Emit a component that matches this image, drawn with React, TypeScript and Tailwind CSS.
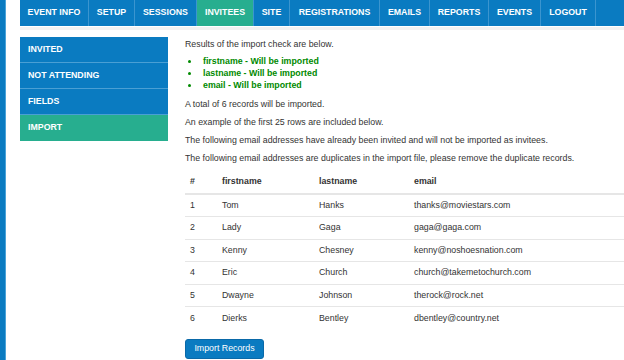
import React from "react";

const navItems = ["EVENT INFO", "SETUP", "SESSIONS", "INVITEES", "SITE", "REGISTRATIONS", "EMAILS", "REPORTS", "EVENTS", "LOGOUT"];
const navWidths = [69, 46, 62, 57, 36, 90, 50, 59, 52, 55];
const sideItems = ["INVITED", "NOT ATTENDING", "FIELDS", "IMPORT"];
const rows = [
  ["1", "Tom", "Hanks", "thanks@moviestars.com"],
  ["2", "Lady", "Gaga", "gaga@gaga.com"],
  ["3", "Kenny", "Chesney", "kenny@noshoesnation.com"],
  ["4", "Eric", "Church", "church@takemetochurch.com"],
  ["5", "Dwayne", "Johnson", "therock@rock.net"],
  ["6", "Dierks", "Bentley", "dbentley@country.net"],
];

export default function App() {
  return (
    <div className="w-[624px] h-[360px] overflow-hidden bg-white flex text-[8.8px] text-[#333333] font-['Liberation_Sans',Arial,sans-serif]">
      <div className="w-[6px] h-full bg-[#0a7bc1] border-r border-[#4aa3d9] shrink-0" />
      <div className="w-[14px] shrink-0" />
      <div className="flex-1 flex flex-col min-w-0">
        <div className="flex h-[26px] bg-[#0a7bc1] shrink-0">
          {navItems.map((n, i) => (
            <div
              key={n}
              style={{ width: navWidths[i] }}
              className={`h-full flex items-center justify-center font-bold text-white border-r border-[#3b95cf] whitespace-nowrap shrink-0 ${
                n === "INVITEES" ? "bg-[#27ae8f]" : ""
              }`}
            >
              {n}
            </div>
          ))}
        </div>
        <div className="h-[1px] bg-white shrink-0" />
        <div className="h-[3px] bg-[#f2f2f2] shrink-0" />
        <div className="flex mt-[7px]">
          <div className="w-[148px] shrink-0 flex flex-col">
            {sideItems.map((s, i) => (
              <div
                key={s}
                className={`h-[26px] flex items-center pl-[8px] font-bold text-white ${
                  s === "IMPORT" ? "bg-[#27ae8f]" : "bg-[#0a7bc1]"
                } ${i < 3 ? "border-b border-[#4a9fd4]" : ""}`}
              >
                {s}
              </div>
            ))}
          </div>
          <div className="ml-[17px] flex-1 min-w-0">
            <p className="leading-[16px] h-[16px] -mt-[1px]">Results of the import check are below.</p>
            <ul className="mt-[3px] ml-[12px] list-disc font-bold text-[#008a00] leading-[12px]">
              <li className="pl-[3px] ml-[3px]">firstname - Will be imported</li>
              <li className="pl-[3px] ml-[3px]">lastname - Will be imported</li>
              <li className="pl-[3px] ml-[3px]">email - Will be imported</li>
            </ul>
            <p className="leading-[16px] mt-[5px]">A total of 6 records will be imported.</p>
            <p className="leading-[16px] mt-[2px]">An example of the first 25 rows are included below.</p>
            <p className="leading-[16px] mt-[2px]">The following email addresses have already been invited and will not be imported as invitees.</p>
            <p className="leading-[16px] mt-[2px] whitespace-nowrap">The following email addresses are duplicates in the import file, please remove the duplicate records.</p>
            <table className="mt-[4px] w-full border-collapse">
              <thead>
                <tr className="h-[24px] border-b-2 border-[#e6e6e6] font-bold text-left">
                  <th className="w-[32px] pl-[5px] font-bold">#</th>
                  <th className="w-[97px] pl-[5px] font-bold">firstname</th>
                  <th className="w-[95px] pl-[5px] font-bold">lastname</th>
                  <th className="pl-[5px] font-bold">email</th>
                </tr>
              </thead>
              <tbody>
                {rows.map((r, i) => (
                  <tr key={r[0]} className={`h-[22.6px] ${i < 5 ? "border-b border-[#e6e6e6]" : ""}`}>
                    {r.map((c, j) => (
                      <td key={j} className="pl-[5px]">{c}</td>
                    ))}
                  </tr>
                ))}
              </tbody>
            </table>
            <button className="mt-[9px] h-[20px] w-[79px] rounded-[3px] bg-[#0a7bc1] border border-[#0a69a8] text-white">
              Import Records
            </button>
          </div>
        </div>
      </div>
    </div>
  );
}
